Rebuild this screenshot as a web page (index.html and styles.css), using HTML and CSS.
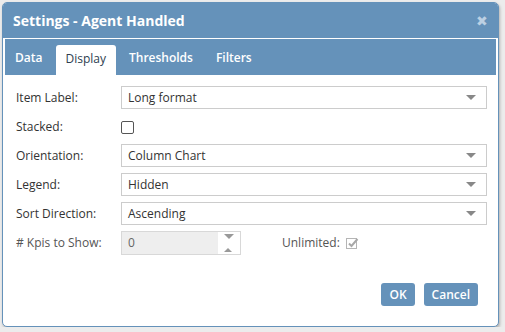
FILE: index.html
```html
<!DOCTYPE html>
<html>
<head>
	<title>Settings - Agent Handled</title>
	<link rel="stylesheet" href="styles.css">
</head>
<body>
	<div class="dialog">
		<div class="titlebar">
			<span class="title">Settings - Agent Handled</span>
			<span class="close">&#10006;</span>
		</div>
		<div class="tabs-wrap">
			<ul class="tabs">
				<li>Data</li>
				<li class="active">Display</li>
				<li>Thresholds</li>
				<li>Filters</li>
			</ul>
			<div class="panel">
				<div class="row">
					<label>Item Label:</label>
					<div class="select">Long format<span class="arrow"></span></div>
				</div>
				<div class="row">
					<label>Stacked:</label>
					<span class="check"></span>
				</div>
				<div class="row">
					<label>Orientation:</label>
					<div class="select">Column Chart<span class="arrow"></span></div>
				</div>
				<div class="row">
					<label>Legend:</label>
					<div class="select">Hidden<span class="arrow"></span></div>
				</div>
				<div class="row">
					<label>Sort Direction:</label>
					<div class="select">Ascending<span class="arrow"></span></div>
				</div>
				<div class="row">
					<label class="muted">&#35; Kpis to Show:</label>
					<div class="spinner">0<span class="spin"><span class="down"></span><span class="up"></span></span></div>
					<label class="muted unl">Unlimited:</label>
					<span class="check checked">
						<svg width="13" height="13" viewBox="0 0 13 13"><rect x="0.5" y="1.5" width="10" height="10" fill="none" stroke="#b5b5b5"/><path d="M3 6.5 L5.5 9 L11.5 2" fill="none" stroke="#a8a8a8" stroke-width="2"/></svg>
					</span>
				</div>
			</div>
		</div>
		<div class="buttons">
			<button>OK</button>
			<button>Cancel</button>
		</div>
	</div>
</body>
</html>
```

FILE: styles.css
```css
body {
	margin: 0;
	background-color: #ececec;
	font-family: "Open Sans", Arial, sans-serif;
	font-size: 12px;
	color: #333;
}
.dialog {
	margin: 2px 0 0 2px;
	width: 497px;
	height: 325px;
	box-sizing: border-box;
	background-color: #fff;
	border: 1px solid #6592ba;
	border-radius: 5px;
	box-shadow: 1px 2px 3px rgba(0,0,0,0.25);
	overflow: hidden;
}
.titlebar {
	background-color: #6592ba;
	height: 35px;
	padding: 0 10px 0 10px;
	display: flex;
	align-items: center;
	justify-content: space-between;
	color: #fff;
}
.title {
	font-weight: bold;
	font-size: 14px;
}
.close {
	color: #bcd0e3;
	font-size: 14px;
}
.tabs-wrap {
	margin: 0 1px;
	border: 1px solid #fff;
}
.tabs {
	list-style: none;
	margin: 0;
	padding: 6px 0 0 0;
	height: 30px;
	background-color: #6592ba;
	display: flex;
	border-left: 1px solid #6592ba;
	border-right: 1px solid #6592ba;
}
.tabs li {
	color: #fff;
	font-size: 12px;
	font-weight: 600;
	padding: 0 10px 0 9px;
	line-height: 26px;
	margin-right: 4px;
	border-radius: 3px 3px 0 0;
}
.tabs li.active {
	background-color: #fff;
	color: #2e3e50;
	font-weight: normal;
	line-height: 28px;
	height: 30px;
}
.panel {
	padding: 8px 9px 0 11px;
}
.row {
	display: flex;
	align-items: center;
	height: 29px;
}
.row label {
	width: 105px;
	color: #333;
}
.row label.muted {
	color: #555;
}
.select {
	flex: 1;
	height: 23px;
	box-sizing: border-box;
	border: 1px solid #ccc;
	padding: 0 6px;
	line-height: 21px;
	color: #333;
	position: relative;
}
.arrow {
	position: absolute;
	right: 10px;
	top: 8px;
	border-left: 5px solid transparent;
	border-right: 5px solid transparent;
	border-top: 5px solid #888;
}
.check {
	display: inline-block;
	width: 11px;
	height: 11px;
	border: 1px solid #555;
	border-radius: 2px;
	margin-top: 1px;
}
.check.checked {
	border: none;
	width: 13px;
	height: 13px;
}
.spinner {
	width: 120px;
	height: 24px;
	box-sizing: border-box;
	background-color: #eee;
	border: 1px solid #d8d8d8;
	padding: 0 6px;
	line-height: 22px;
	color: #666;
	position: relative;
}
.spin {
	position: absolute;
	right: 0;
	top: 0;
	width: 22px;
	height: 22px;
	background-color: #fff;
}
.spin .down {
	position: absolute;
	left: 6px;
	top: 2px;
	border-left: 5px solid transparent;
	border-right: 5px solid transparent;
	border-top: 5px solid #999;
}
.spin .up {
	position: absolute;
	left: 6px;
	bottom: 2px;
	border-left: 4px solid transparent;
	border-right: 4px solid transparent;
	border-bottom: 4px solid #999;
}
.row label.unl {
	width: auto;
	margin-left: 41px;
	margin-right: 6px;
}
.buttons {
	display: flex;
	justify-content: flex-end;
	gap: 9px;
	padding: 25px 20px 0 0;
}
button {
	background-color: #6592ba;
	color: #fff;
	border: none;
	border-radius: 3px;
	font-family: "Open Sans", Arial, sans-serif;
	font-size: 12px;
	font-weight: 600;
	height: 23px;
	padding: 0 8px;
}
```
